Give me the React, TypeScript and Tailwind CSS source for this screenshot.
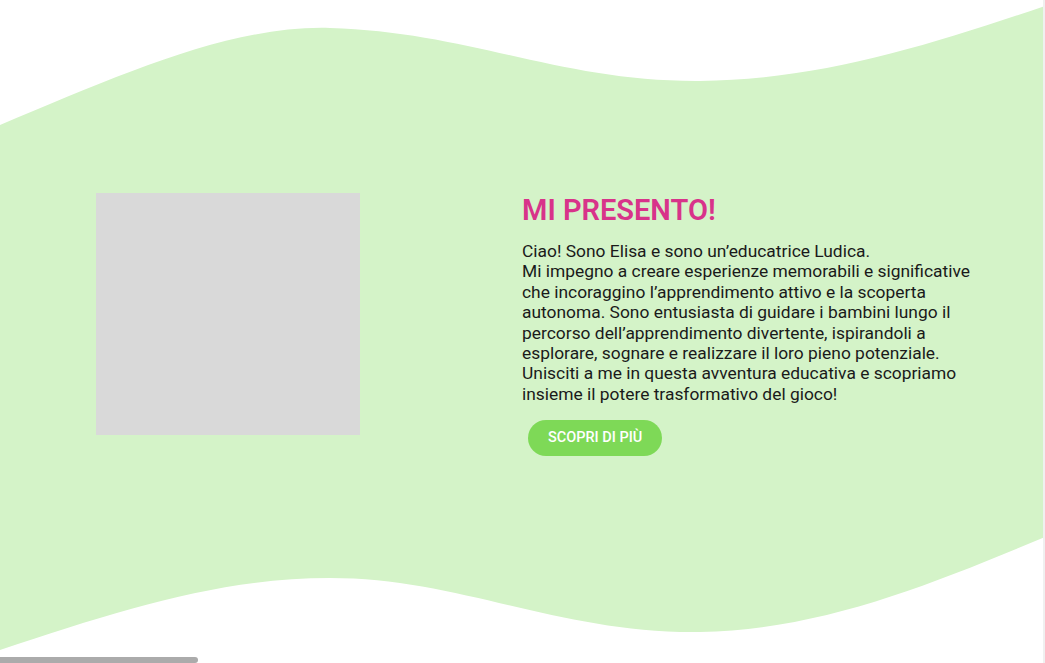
export default function App() {
    return (
        <div
            className="relative h-[663px] w-full overflow-hidden bg-white"
            style={{ fontFamily: "Roboto, 'Liberation Sans', sans-serif" }}
        >
            {/* Wave background */}
            <svg
                className="pointer-events-none absolute inset-0 h-full w-full"
                viewBox="0 0 1045 663"
                preserveAspectRatio="none"
            >
                <path
                    d="M0,125 C120,75 230,25 330,28 C470,32 560,82 700,81 C820,80 930,45 1045,6 L1045,537 C930,585 820,630 700,632 C560,634 460,578 330,578 C220,578 120,610 0,650 Z"
                    fill="#d4f3c8"
                />
            </svg>

            <section className="relative flex items-start pl-[96px] pt-[193px]">
                {/* Photo placeholder */}
                <div className="h-[242px] w-[264px] shrink-0 bg-[#d9d9d9]" />

                <div className="ml-[162px] w-[455px]">
                    <h2 className="text-[29px] leading-[34px] font-semibold text-[#d8338a]">
                        MI PRESENTO!
                    </h2>
                    <p className="mt-[14px] text-[17.4px] leading-[20.4px] text-[#1a1a1a]">
                        Ciao! Sono Elisa e sono un’educatrice Ludica.
                        <br />
                        Mi impegno a creare esperienze memorabili e significative che incoraggino
                        l’apprendimento attivo e la scoperta autonoma. Sono entusiasta di guidare i
                        bambini lungo il percorso dell’apprendimento divertente, ispirandoli a
                        esplorare, sognare e realizzare il loro pieno potenziale. Unisciti a me in
                        questa avventura educativa e scopriamo insieme il potere trasformativo del
                        gioco!
                    </p>
                    <button className="mt-[16px] ml-[6px] h-[36px] rounded-full bg-[#7ed957] px-[20px] text-[14.5px] font-medium text-white">
                        SCOPRI DI PIÙ
                    </button>
                </div>
            </section>

            {/* Scrollbar remnants */}
            <div className="absolute bottom-0 left-0 h-[6px] w-[198px] rounded-r-full bg-[#ababab]" />
            <div className="absolute top-0 right-0 h-full w-[2px] bg-[#f0f0f0]" />
        </div>
    );
}
